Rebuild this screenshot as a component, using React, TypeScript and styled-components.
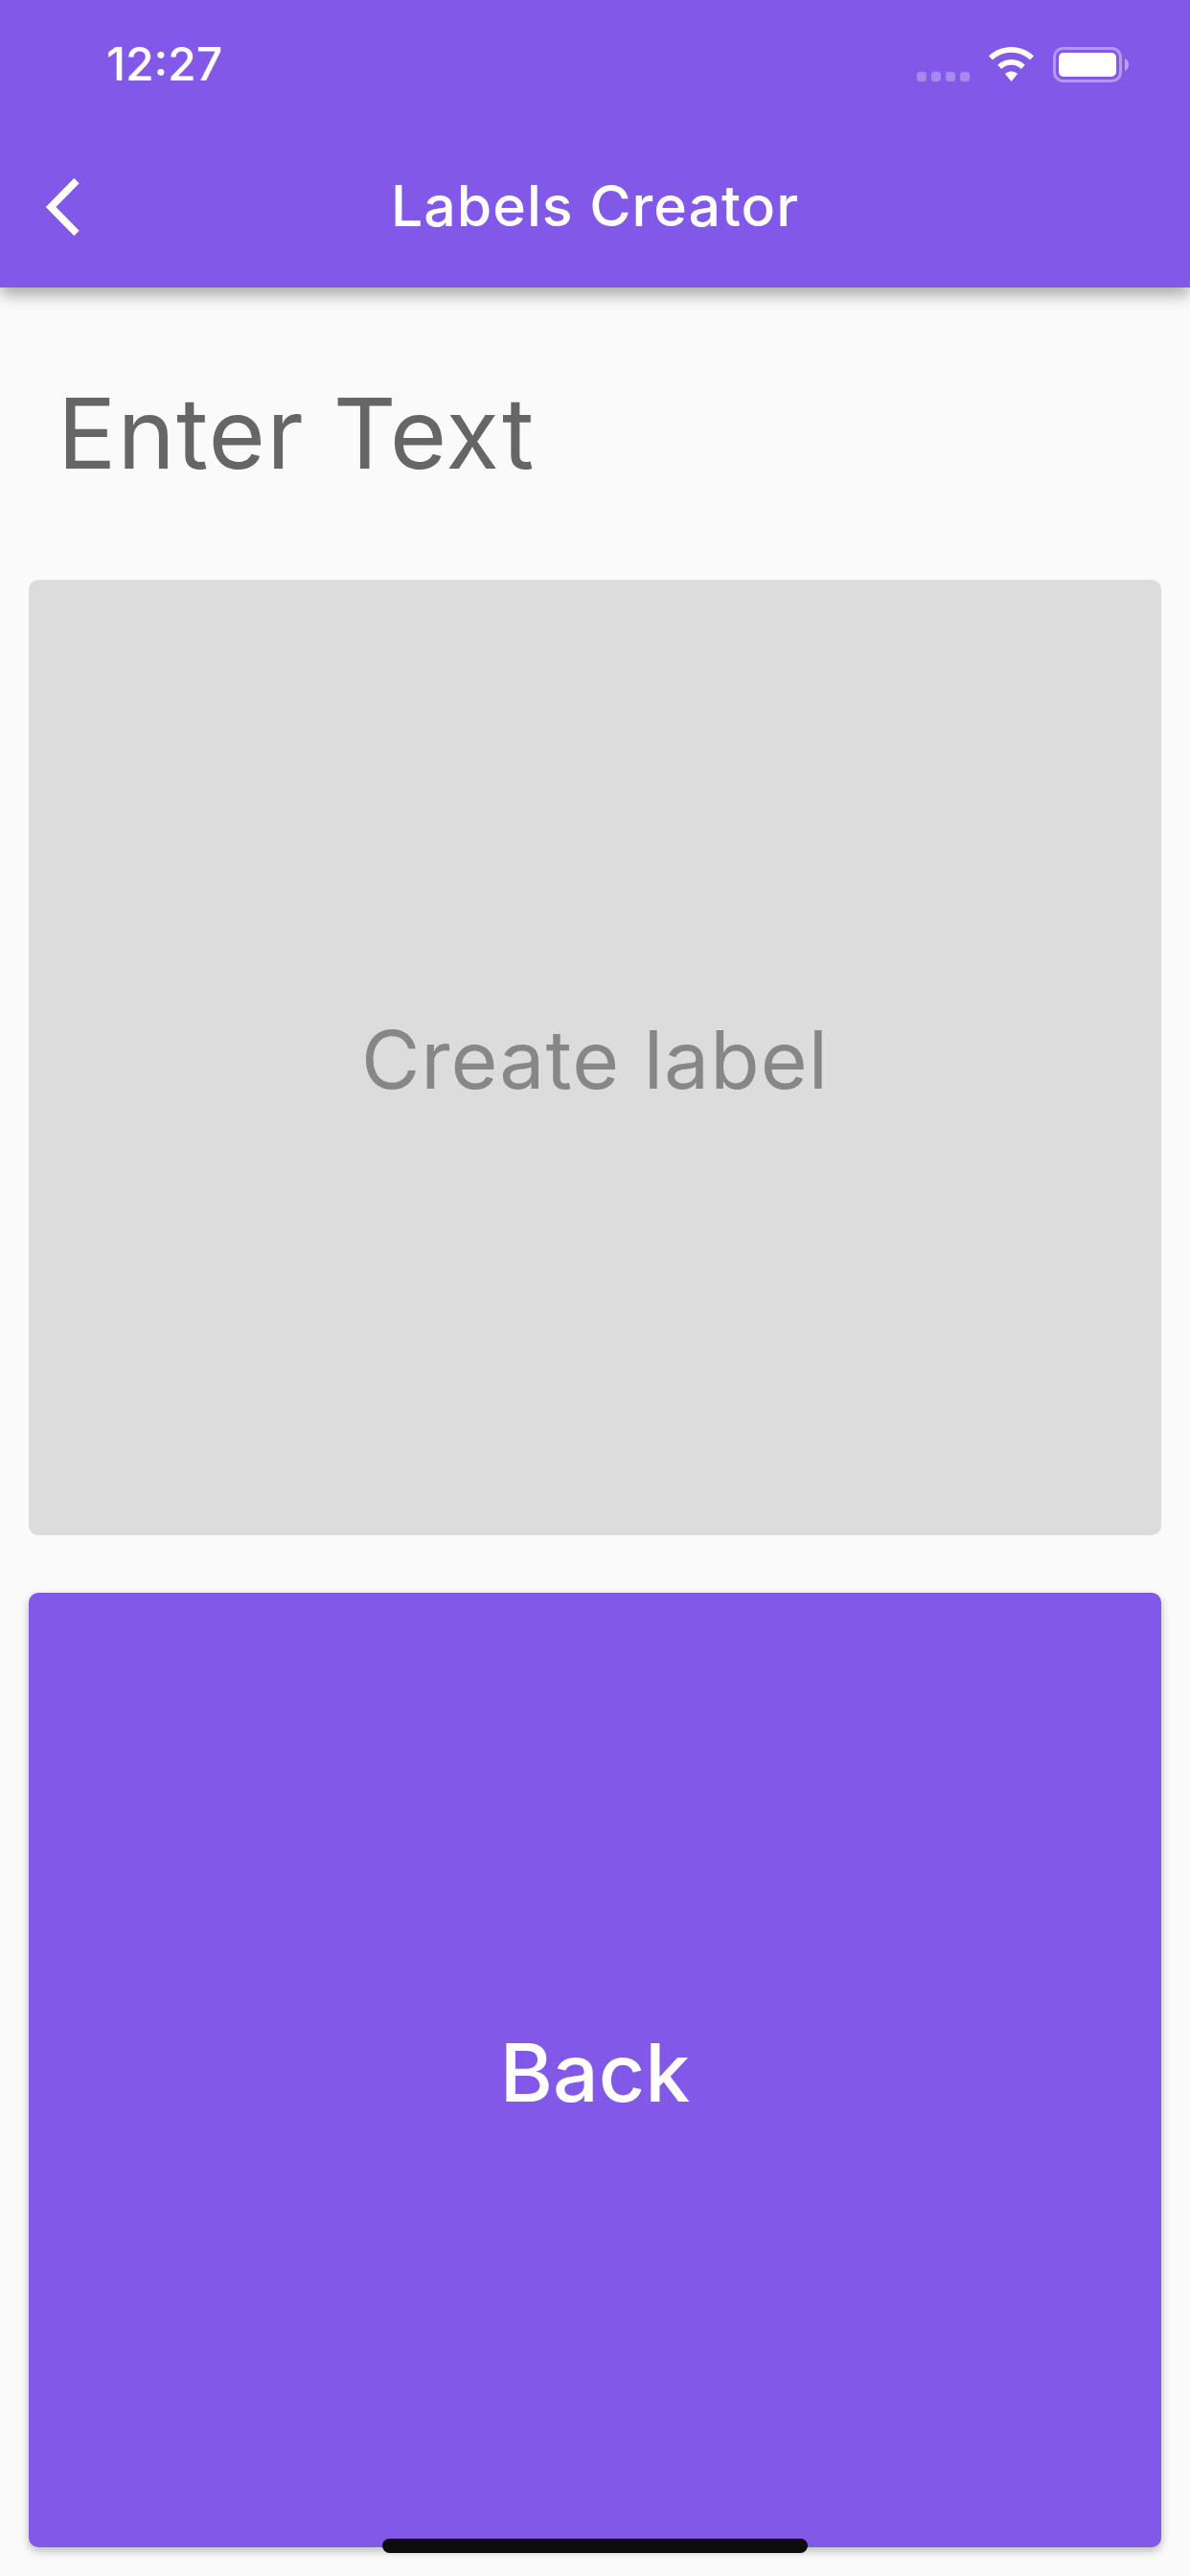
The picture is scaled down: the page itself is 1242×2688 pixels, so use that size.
import React, { FC } from "react";
import styled, { createGlobalStyle } from "styled-components";

const GlobalStyle = createGlobalStyle`
    html, body {
        margin: 0;
        padding: 0;
        background-color: #fafafa;
    }
`;

const Screen = styled.div`
    position: relative;
    display: flex;
    flex-direction: column;
    width: 1242px;
    height: 2688px;
    overflow: hidden;
    background-color: #fafafa;
    font-family: Inter, "Liberation Sans", sans-serif;
`;

const Header = styled.header`
    height: 300px;
    flex-shrink: 0;
    display: flex;
    flex-direction: column;
    background-color: #8158e7;
    box-shadow: 0 9px 15px -1px rgba(0, 0, 0, 0.32);
`;

const StatusBar = styled.div`
    height: 132px;
    display: flex;
    align-items: flex-start;
    justify-content: space-between;
    padding: 49px 64px 0 111px;
    box-sizing: border-box;
`;

const Time = styled.span`
    color: #ffffff;
    font-size: 48px;
    line-height: 36px;
    font-weight: 500;
`;

const StatusIcons = styled.div`
    display: flex;
    align-items: flex-start;
`;

const Signal = styled.div`
    display: flex;
    gap: 5px;
    margin-top: 26px;
    margin-right: 20px;
`;

const SignalDot = styled.span`
    width: 10px;
    height: 10px;
    border-radius: 3px;
    background-color: rgba(255, 255, 255, 0.3);
`;

const Toolbar = styled.div`
    position: relative;
    flex: 1;
    display: flex;
    align-items: center;
    justify-content: center;
    padding-bottom: 2px;
`;

const BackIcon = styled.svg`
    position: absolute;
    left: 48px;
    top: 54px;
`;

const Title = styled.h1`
    margin: 0;
    color: #ffffff;
    font-size: 59px;
    line-height: 60px;
    font-weight: 500;
    letter-spacing: 1px;
`;

const Content = styled.main`
    flex: 1;
    display: flex;
    flex-direction: column;
    padding: 0 30px 30px;
`;

const Heading = styled.h2`
    margin: 0;
    height: 305px;
    padding: 97px 0 0 30px;
    box-sizing: border-box;
    color: #666666;
    font-size: 102px;
    line-height: 110px;
    font-weight: 400;
    letter-spacing: 1.2px;
`;

const ActionButton = styled.button<{ $primary?: boolean }>`
    height: ${(props) => (props.$primary ? "996px" : "997px")};
    margin-bottom: ${(props) => (props.$primary ? "0" : "60px")};
    padding: 4px 0 0;
    display: flex;
    align-items: center;
    justify-content: center;
    border: none;
    border-radius: 10px;
    background-color: ${(props) => (props.$primary ? "#8158e7" : "#dcdcdc")};
    color: ${(props) => (props.$primary ? "#ffffff" : "#878787")};
    box-shadow: ${(props) => (props.$primary ? "0 4px 8px rgba(0, 0, 0, 0.25)" : "none")};
    font-family: inherit;
    font-size: 84px;
    font-weight: ${(props) => (props.$primary ? 500 : 400)};
    letter-spacing: ${(props) => (props.$primary ? "0" : "1px")};
`;

const HomeIndicator = styled.div`
    position: absolute;
    left: 399px;
    top: 2649px;
    width: 444px;
    height: 15px;
    border-radius: 8px;
    background-color: #0d0d0d;
`;

const WifiIcon: FC = () => (
    <svg width="47" height="36" viewBox="0 0 47 36" style={{ marginRight: 20 }}>
        <path
            fill="#ffffff"
            d="M23.5 0C32.5 0 40.7 3.5 47 9.4L43 13.6C37.8 8.8 31 5.8 23.5 5.8S9.2 8.8 4 13.6L0 9.4C6.300 3.500 14.500 0 23.500 0Z"
        />
        <path
            fill="#ffffff"
            d="M23.5 13C29 13 34 15.100 37.800 18.700L33.800 22.900C31.100 20.400 27.500 18.800 23.500 18.800S15.900 20.400 13.200 22.900L9.200 18.700C13 15.100 18 13 23.500 13Z"
        />
        <path fill="#ffffff" d="M23.500 25.500C26 25.500 28.300 26.400 30 28L23.500 36L17 28C18.700 26.400 21 25.500 23.500 25.500Z" />
    </svg>
);

const BatteryIcon: FC = () => (
    <svg width="79" height="37" viewBox="0 0 79 37">
        <rect x="1.500" y="1.500" width="69" height="34" rx="9" fill="none" stroke="#ffffff" strokeOpacity="0.4" strokeWidth="3" />
        <rect x="6" y="6" width="60" height="25" rx="5" fill="#ffffff" />
        <path fill="#ffffff" fillOpacity="0.45" d="M75 12C77.500 13 79 15.500 79 18.500S77.500 24 75 25Z" />
    </svg>
);

export default function App() {
    return (
        <Screen>
            <GlobalStyle />
            <Header>
                <StatusBar>
                    <Time>12:27</Time>
                    <StatusIcons>
                        <Signal>
                            <SignalDot />
                            <SignalDot />
                            <SignalDot />
                            <SignalDot />
                        </Signal>
                        <WifiIcon />
                        <BatteryIcon />
                    </StatusIcons>
                </StatusBar>
                <Toolbar>
                    <BackIcon width="35" height="60" viewBox="0 0 35 60">
                        <path d="M32 2.500L5 30L32 57.500" fill="none" stroke="#ffffff" strokeWidth="7.500" />
                    </BackIcon>
                    <Title>Labels Creator</Title>
                </Toolbar>
            </Header>
            <Content>
                <Heading>Enter Text</Heading>
                <ActionButton>Create label</ActionButton>
                <ActionButton $primary>Back</ActionButton>
            </Content>
            <HomeIndicator />
        </Screen>
    );
}
